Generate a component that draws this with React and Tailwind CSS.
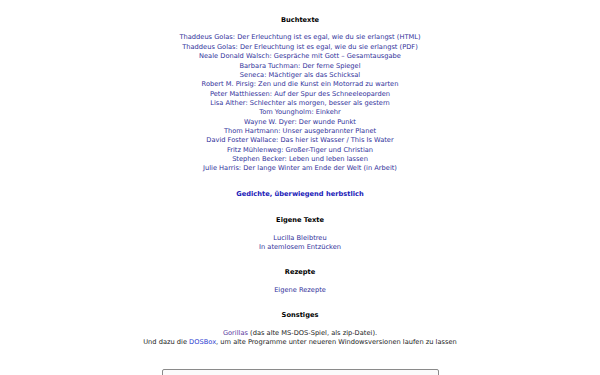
const books = [
  'Thaddeus Golas: Der Erleuchtung ist es egal, wie du sie erlangst (HTML)',
  'Thaddeus Golas: Der Erleuchtung ist es egal, wie du sie erlangst (PDF)',
  'Neale Donald Walsch: Gespräche mit Gott – Gesamtausgabe',
  'Barbara Tuchman: Der ferne Spiegel',
  'Seneca: Mächtiger als das Schicksal',
  'Robert M. Pirsig: Zen und die Kunst ein Motorrad zu warten',
  'Peter Matthiessen: Auf der Spur des Schneeleoparden',
  'Lisa Alther: Schlechter als morgen, besser als gestern',
  'Tom Youngholm: Einkehr',
  'Wayne W. Dyer: Der wunde Punkt',
  'Thom Hartmann: Unser ausgebrannter Planet',
  'David Foster Wallace: Das hier ist Wasser / This Is Water',
  'Fritz Mühlenweg: Großer-Tiger und Christian',
  'Stephen Becker: Leben und leben lassen',
  'Julie Harris: Der lange Winter am Ende der Welt (in Arbeit)',
]

function Heading({ children, className = '' }) {
  return <h2 className={`font-bold text-black ${className}`}>{children}</h2>
}

function LinkList({ items }) {
  return (
    <ul className="mt-[8.6px]">
      {items.map((t) => (
        <li key={t}>
          <a href="#" className="text-[#30309a]">{t}</a>
        </li>
      ))}
    </ul>
  )
}

export default function App() {
  return (
    <div className="min-h-screen bg-white pt-[15.5px] text-center font-['DejaVu_Sans',sans-serif] text-[6.67px] leading-[9.36px] text-[#222]">
      <Heading>Buchtexte</Heading>
      <LinkList items={books} />

      <p className="mt-[16.3px]">
        <a href="#" className="font-bold text-[#2020b8]">Gedichte, überwiegend herbstlich</a>
      </p>

      <Heading className="mt-[16.6px]">Eigene Texte</Heading>
      <LinkList items={['Lucilla Bleibtreu', 'In atemlosem Entzücken']} />

      <Heading className="mt-[15.3px]">Rezepte</Heading>
      <LinkList items={['Eigene Rezepte']} />

      <Heading className="mt-[15.8px]">Sonstiges</Heading>
      <div className="mt-[8.6px]">
        <p>
          <a href="#" className="text-[#5a3aa0]">Gorillas</a> (das alte MS-DOS-Spiel, als zip-Datei).
        </p>
        <p>
          Und dazu die <a href="#" className="text-[#2a3ad0]">DOSBox</a>, um alte Programme unter neueren Windowsversionen laufen zu lassen
        </p>
      </div>

      <div className="mx-auto mt-[21.5px] h-[40px] w-[277px] rounded-t-[2px] border border-[#8a8a8a] bg-[#fbfbfb]" />
    </div>
  )
}
